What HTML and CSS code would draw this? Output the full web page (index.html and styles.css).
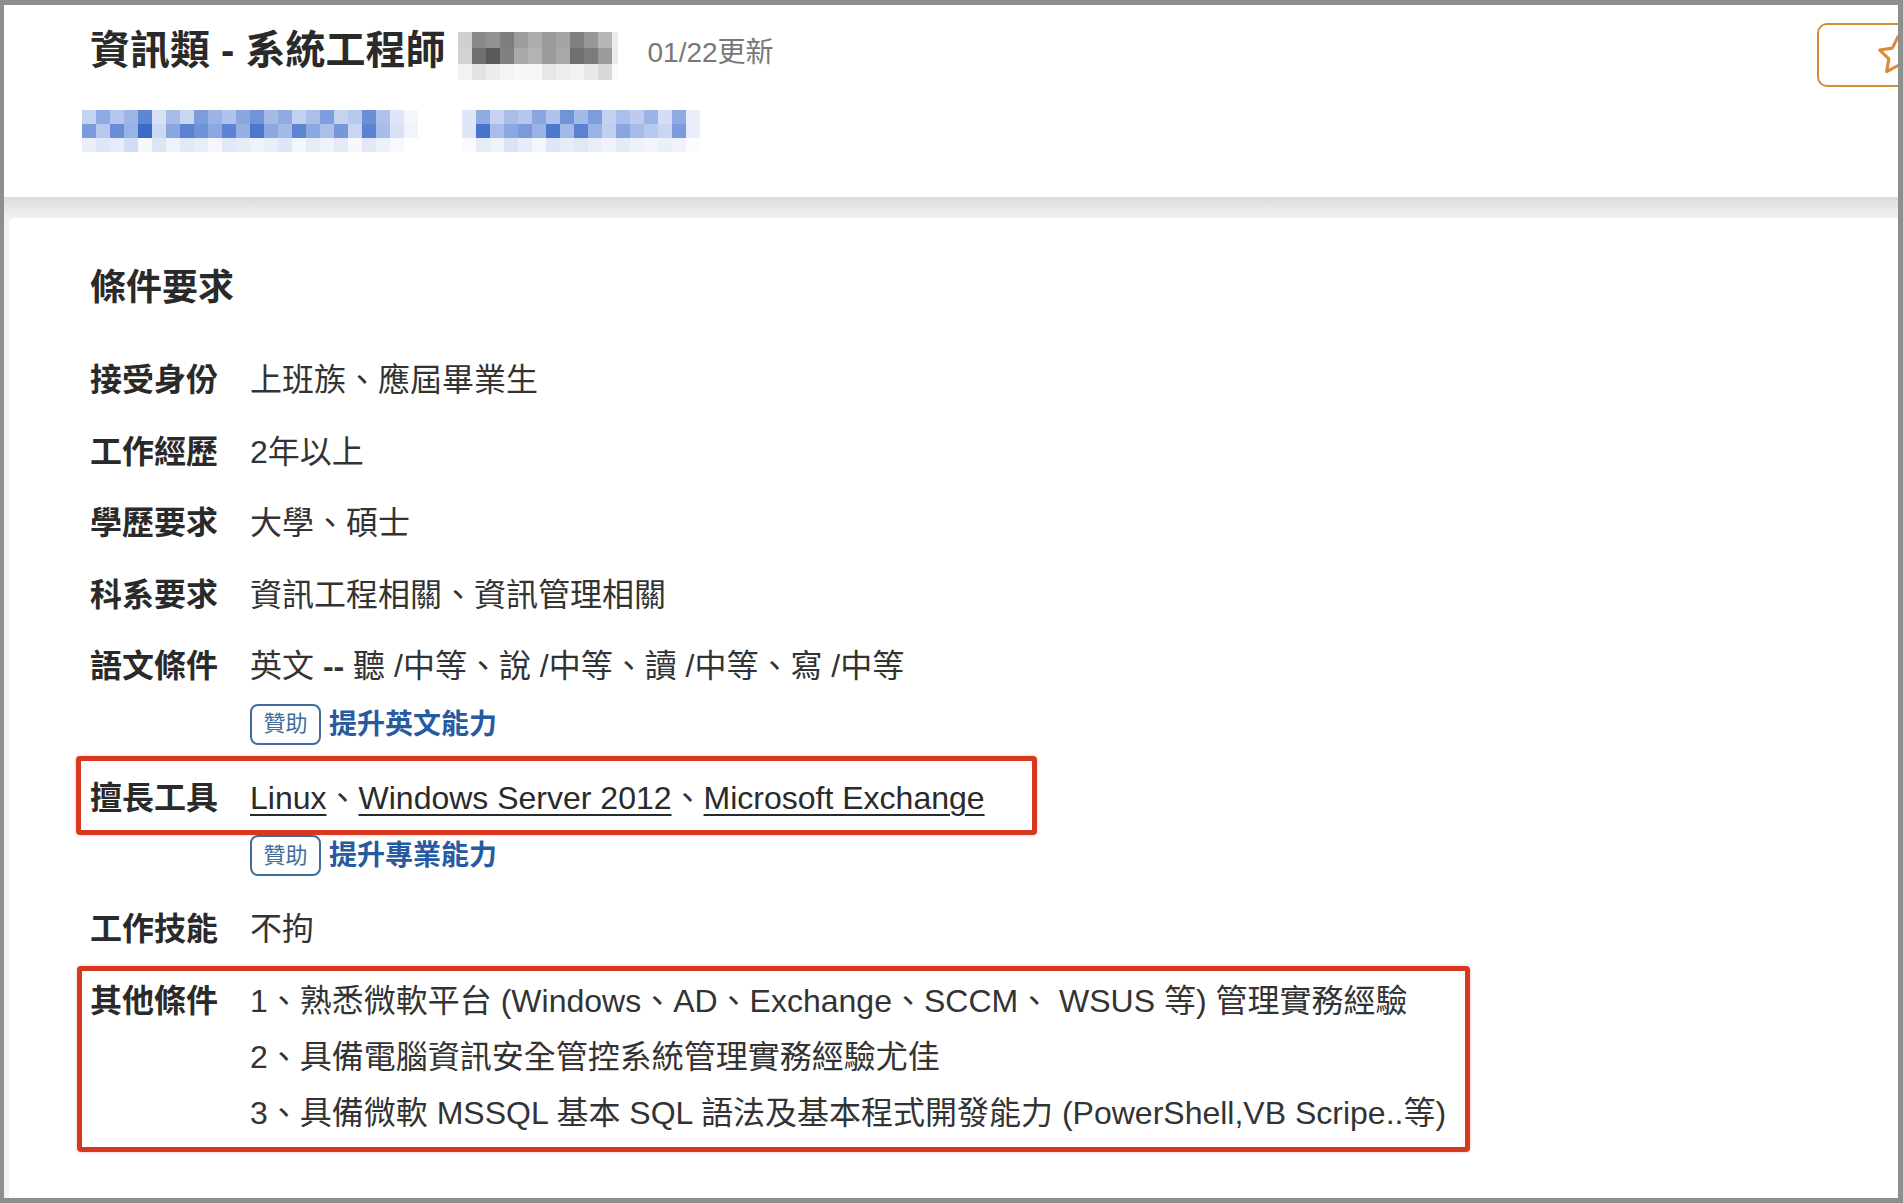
FILE: index.html
```html
<!DOCTYPE html>
<html lang="zh-Hant">
<head>
<meta charset="utf-8">
<title>資訊類 - 系統工程師</title>
<link rel="stylesheet" href="styles.css">
</head>
<body>
<div class="screen">
  <header class="job-header">
    <div class="job-head-main">
      <div class="title-row">
        <h1 class="job-title">資訊類 - 系統工程師</h1>
        <div class="mosaic mosaic-gray" aria-hidden="true">
          <div class="mrow g1"></div><div class="mrow g2"></div><div class="mrow g3"></div>
        </div>
        <span class="update-date">01/22更新</span>
      </div>
      <div class="company-row" aria-hidden="true">
        <div class="mosaic mosaic-blue-a">
          <div class="mrow a1"></div><div class="mrow a2"></div><div class="mrow a3"></div>
        </div>
        <div class="mosaic mosaic-blue-b">
          <div class="mrow b1"></div><div class="mrow b2"></div><div class="mrow b3"></div>
        </div>
      </div>
    </div>
    <button class="save-btn" type="button" aria-label="儲存">
      <svg class="star" viewBox="0 0 24 24" width="44" height="44" aria-hidden="true">
        <path d="M12 2l3.09 6.26L22 9.27l-5 4.87 1.18 6.88L12 17.77l-6.18 3.25L7 14.14 2 9.27l6.91-1.01L12 2z"/>
      </svg>
    </button>
  </header>

  <main class="content">
    <section class="card">
      <h2 class="section-title">條件要求</h2>
      <div class="req-list">
        <div class="req-row">
          <div class="req-label">接受身份</div>
          <div class="req-value">上班族、應屆畢業生</div>
        </div>
        <div class="req-row">
          <div class="req-label">工作經歷</div>
          <div class="req-value">2年以上</div>
        </div>
        <div class="req-row">
          <div class="req-label">學歷要求</div>
          <div class="req-value">大學、碩士</div>
        </div>
        <div class="req-row">
          <div class="req-label">科系要求</div>
          <div class="req-value">資訊工程相關、資訊管理相關</div>
        </div>
        <div class="req-row">
          <div class="req-label">語文條件</div>
          <div class="req-value">
            <div>英文 <span class="dash">--</span> 聽 /中等、說 /中等、讀 /中等、寫 /中等</div>
            <div class="sponsor"><span class="badge">贊助</span><a class="sponsor-link" href="#">提升英文能力</a></div>
          </div>
        </div>
        <div class="req-row mark mark-tools">
          <div class="req-label">擅長工具</div>
          <div class="req-value">
            <div><a class="tool-link" href="#">Linux</a>、<a class="tool-link" href="#">Windows Server 2012</a>、<a class="tool-link" href="#">Microsoft Exchange</a></div>
            <div class="sponsor"><span class="badge">贊助</span><a class="sponsor-link" href="#">提升專業能力</a></div>
          </div>
        </div>
        <div class="req-row">
          <div class="req-label">工作技能</div>
          <div class="req-value">不拘</div>
        </div>
        <div class="req-row mark mark-other">
          <div class="req-label">其他條件</div>
          <div class="req-value">
            <div>1、熟悉微軟平台 (Windows、AD、Exchange、SCCM、 WSUS 等) 管理實務經驗</div>
            <div>2、具備電腦資訊安全管控系統管理實務經驗尤佳</div>
            <div>3、具備微軟 MSSQL 基本 SQL 語法及基本程式開發能力 (PowerShell,VB Scripe..等)</div>
          </div>
        </div>
      </div>
    </section>
  </main>
</div>
</body>
</html>
```

FILE: styles.css
```css
*, *::before, *::after { box-sizing: border-box; }
html, body { margin: 0; padding: 0; }
body {
  background: #8e8e8e;
  font-family: "Liberation Sans", "Noto Sans CJK TC", sans-serif;
  color: #333;
}
.screen {
  margin: 5px 5px 0 4px;
  height: 1193px;
  overflow: hidden;
  background: #f2f2f2;
}

/* header */
.job-header {
  height: 192px;
  background: #fff;
  display: flex;
  align-items: flex-start;
  padding: 20px 0 0 86px;
}
.job-head-main { display: flex; flex-direction: column; }
.title-row { display: flex; align-items: flex-start; height: 50px; }
.job-title {
  margin: 0;
  font-size: 40px;
  line-height: 50px;
  font-weight: 700;
  color: #2a2a2a;
}
.update-date {
  margin: 3px 0 0 30px;
  font-size: 28px;
  line-height: 50px;
  color: #787878;
}
.mosaic { display: flex; flex-direction: column; }
.mosaic-gray { width: 160px; margin: 7px 0 0 12px; }
.mosaic-gray .mrow { height: 16px; }
.company-row { display: flex; gap: 44px; margin: 35px 0 0 -8px; }
.mosaic-blue-a { width: 336px; }
.mosaic-blue-b { width: 238px; }
.company-row .mrow { height: 14px; }

.g1 { background: linear-gradient(90deg,
  #cfcfcf 0 14px, #8a8a8a 14px 28px, #929292 28px 42px, #7e7e7e 42px 56px, #9d9d9d 56px 70px, #adadad 70px 84px,
  #9a9a9a 84px 98px, #a3a3a3 98px 112px, #7f7f7f 112px 126px, #979797 126px 140px, #b7b7b7 140px 154px, #ececec 154px 168px); }
.g2 { background: linear-gradient(90deg,
  #d2d2d2 0 14px, #707070 14px 28px, #5a5a5a 28px 42px, #818181 42px 56px, #a9a9a9 56px 70px, #b3b3b3 70px 84px,
  #9c9c9c 84px 98px, #a9a9a9 98px 112px, #707070 112px 126px, #7b7b7b 126px 140px, #9b9b9b 140px 154px, #eaeaea 154px 168px); }
.g3 { background: linear-gradient(90deg,
  #f2f2f2 0 14px, #e3e3e3 14px 28px, #ececec 28px 42px, #f4f4f4 42px 56px, #f7f7f7 56px 70px, #f6f6f6 70px 84px,
  #e7e7e7 84px 98px, #eeeeee 98px 112px, #f2f2f2 112px 126px, #e8e8e8 126px 140px, #d8d8d8 140px 154px, #fafafa 154px 168px); }

.a1 { background: linear-gradient(90deg,
  #c4d3f0 0 14px, #8eaae2 14px 28px, #b5c7ee 28px 42px, #9db4e6 42px 56px, #5f86d2 56px 70px, #d7e0f5 70px 84px,
  #a6bbe8 84px 98px, #c9d5f1 98px 112px, #7c9cdc 112px 126px, #9cb3e6 126px 140px, #b0c3ec 140px 154px, #8aa7e1 154px 168px,
  #7193d8 168px 182px, #a4bae7 182px 196px, #8fabe2 196px 210px, #c2d1f0 210px 224px, #aabfe9 224px 238px, #7e9edd 238px 252px,
  #c5d3f1 252px 266px, #b7c8ee 266px 280px, #6a8ed7 280px 294px, #aec1eb 294px 308px, #dde5f6 308px 322px, #f3f6fc 322px 336px); }
.a2 { background: linear-gradient(90deg,
  #7b9bdc 0 14px, #b7c8ee 14px 28px, #6a8ed6 28px 42px, #9ab2e5 42px 56px, #3a6bc8 56px 70px, #cdd8f2 70px 84px,
  #8aa6e1 84px 98px, #5a82d1 98px 112px, #6f92d8 112px 126px, #8ca8e2 126px 140px, #5d84d2 140px 154px, #97afe4 154px 168px,
  #4b78cd 168px 182px, #8ea9e2 182px 196px, #a5bae8 196px 210px, #5e85d2 210px 224px, #8da9e2 224px 238px, #abbfe9 238px 252px,
  #7698da 252px 266px, #c9d5f1 266px 280px, #5c83d2 280px 294px, #a7bce8 294px 308px, #d8e1f5 308px 322px, #f1f4fb 322px 336px); }
.a3 { background: linear-gradient(90deg,
  #e9eef9 0 14px, #dfe6f7 14px 28px, #e6ecf8 28px 42px, #d2dcf3 42px 56px, #f6f8fd 56px 70px, #dde4f6 70px 84px,
  #eef2fb 84px 98px, #e2e8f7 98px 112px, #e8edf9 112px 126px, #f4f6fc 126px 140px, #e0e7f7 140px 154px, #e5ebf8 154px 168px,
  #eef2fb 168px 182px, #e9eef9 182px 196px, #dfe6f7 196px 210px, #f3f6fc 210px 224px, #e7ecf9 224px 238px, #eff3fb 238px 252px,
  #e4eaf8 252px 266px, #f6f8fd 266px 280px, #e2e8f7 280px 294px, #edf1fa 294px 308px, #f7f9fd 308px 322px, #ffffff 322px 336px); }

.b1 { background: linear-gradient(90deg,
  #dfe6f7 0 14px, #8fabe2 14px 28px, #c5d3f1 28px 42px, #a9bde9 42px 56px, #b6c7ed 56px 70px, #8aa6e1 70px 84px,
  #b0c3ec 84px 98px, #7193d8 98px 112px, #a4bae7 112px 126px, #7c9cdc 126px 140px, #c2d1f0 140px 154px, #aabfe9 154px 168px,
  #bccbef 168px 182px, #9cb3e6 182px 196px, #d4ddf4 196px 210px, #8fabe2 210px 224px, #e8edf9 224px 238px); }
.b2 { background: linear-gradient(90deg,
  #dfe6f7 0 14px, #4774cc 14px 28px, #a8bde9 28px 42px, #8ca8e2 42px 56px, #7a9adb 56px 70px, #9ab2e5 70px 84px,
  #4d79cd 84px 98px, #a3b9e7 98px 112px, #5b82d1 112px 126px, #9ab2e5 126px 140px, #c0cff0 140px 154px, #8aa6e1 154px 168px,
  #a6bbe8 168px 182px, #b8c9ee 182px 196px, #c9d5f1 196px 210px, #7b9bdc 210px 224px, #e8edf9 224px 238px); }
.b3 { background: linear-gradient(90deg,
  #fafbfe 0 14px, #e5ebf8 14px 28px, #eef2fb 28px 42px, #dbe3f6 42px 56px, #e7ecf9 56px 70px, #f3f6fc 70px 84px,
  #dfe6f7 84px 98px, #e6ecf8 98px 112px, #e1e7f7 112px 126px, #e9eef9 126px 140px, #f0f3fb 140px 154px, #e4eaf8 154px 168px,
  #edf1fa 168px 182px, #f2f5fc 182px 196px, #eaeff9 196px 210px, #f0f3fb 210px 224px, #fbfcfe 224px 238px); }

.save-btn {
  margin: -2px -89px 0 auto;
  flex: none;
  width: 170px;
  height: 64px;
  border: 2px solid #d88b3c;
  border-radius: 10px;
  background: #fff;
  padding: 0 0 0 57px;
  display: flex;
  align-items: center;
}
.star { display: block; }
.star path {
  fill: none;
  stroke: #d88b3c;
  stroke-width: 1.7;
  stroke-linejoin: round;
}

/* content */
.content {
  padding-top: 21px;
  background: linear-gradient(#dcdcdc, #f2f2f2 21px);
  height: 1001px;
}
.card {
  margin-left: 5px;
  height: 980px;
  background: #fff;
  border-radius: 6px 0 0 0;
  padding: 45px 0 0 81px;
}
.section-title {
  margin: 0;
  font-size: 36px;
  line-height: 50px;
  font-weight: 700;
  color: #2a2a2a;
}
.req-list {
  margin-top: 39px;
  display: flex;
  flex-direction: column;
  gap: 15.5px;
}
.req-row {
  position: relative;
  display: flex;
  font-size: 32px;
  line-height: 56px;
}
.req-label {
  flex: none;
  width: 160px;
  font-weight: 700;
  color: #2a2a2a;
}
.req-value { color: #333; }
.dash { font-weight: 700; }
.tool-link {
  color: #2a2a2a;
  text-decoration: underline;
  text-decoration-thickness: 2px;
  text-underline-offset: 5px;
}
.sponsor {
  display: flex;
  align-items: center;
  gap: 8px;
  height: 60px;
}
.badge {
  width: 71px;
  height: 41px;
  border: 2px solid #3f6d9c;
  border-radius: 8px;
  display: flex;
  align-items: center;
  justify-content: center;
  font-size: 22px;
  line-height: 1;
  color: #426d98;
}
.sponsor-link {
  font-size: 28px;
  line-height: 41px;
  font-weight: 700;
  color: #275aa0;
  text-decoration: none;
}

/* annotation boxes drawn over the content */
.mark::after {
  content: "";
  position: absolute;
  border: 5px solid #d6391f;
  border-radius: 4px;
  box-shadow: 0 0 3px rgba(214, 57, 31, 0.35);
  pointer-events: none;
}
.mark-tools::after { left: -14px; top: -13.5px; width: 961px; height: 79px; }
.mark-other::after { left: -13px; top: -6.5px; width: 1393px; height: 186px; }
```
